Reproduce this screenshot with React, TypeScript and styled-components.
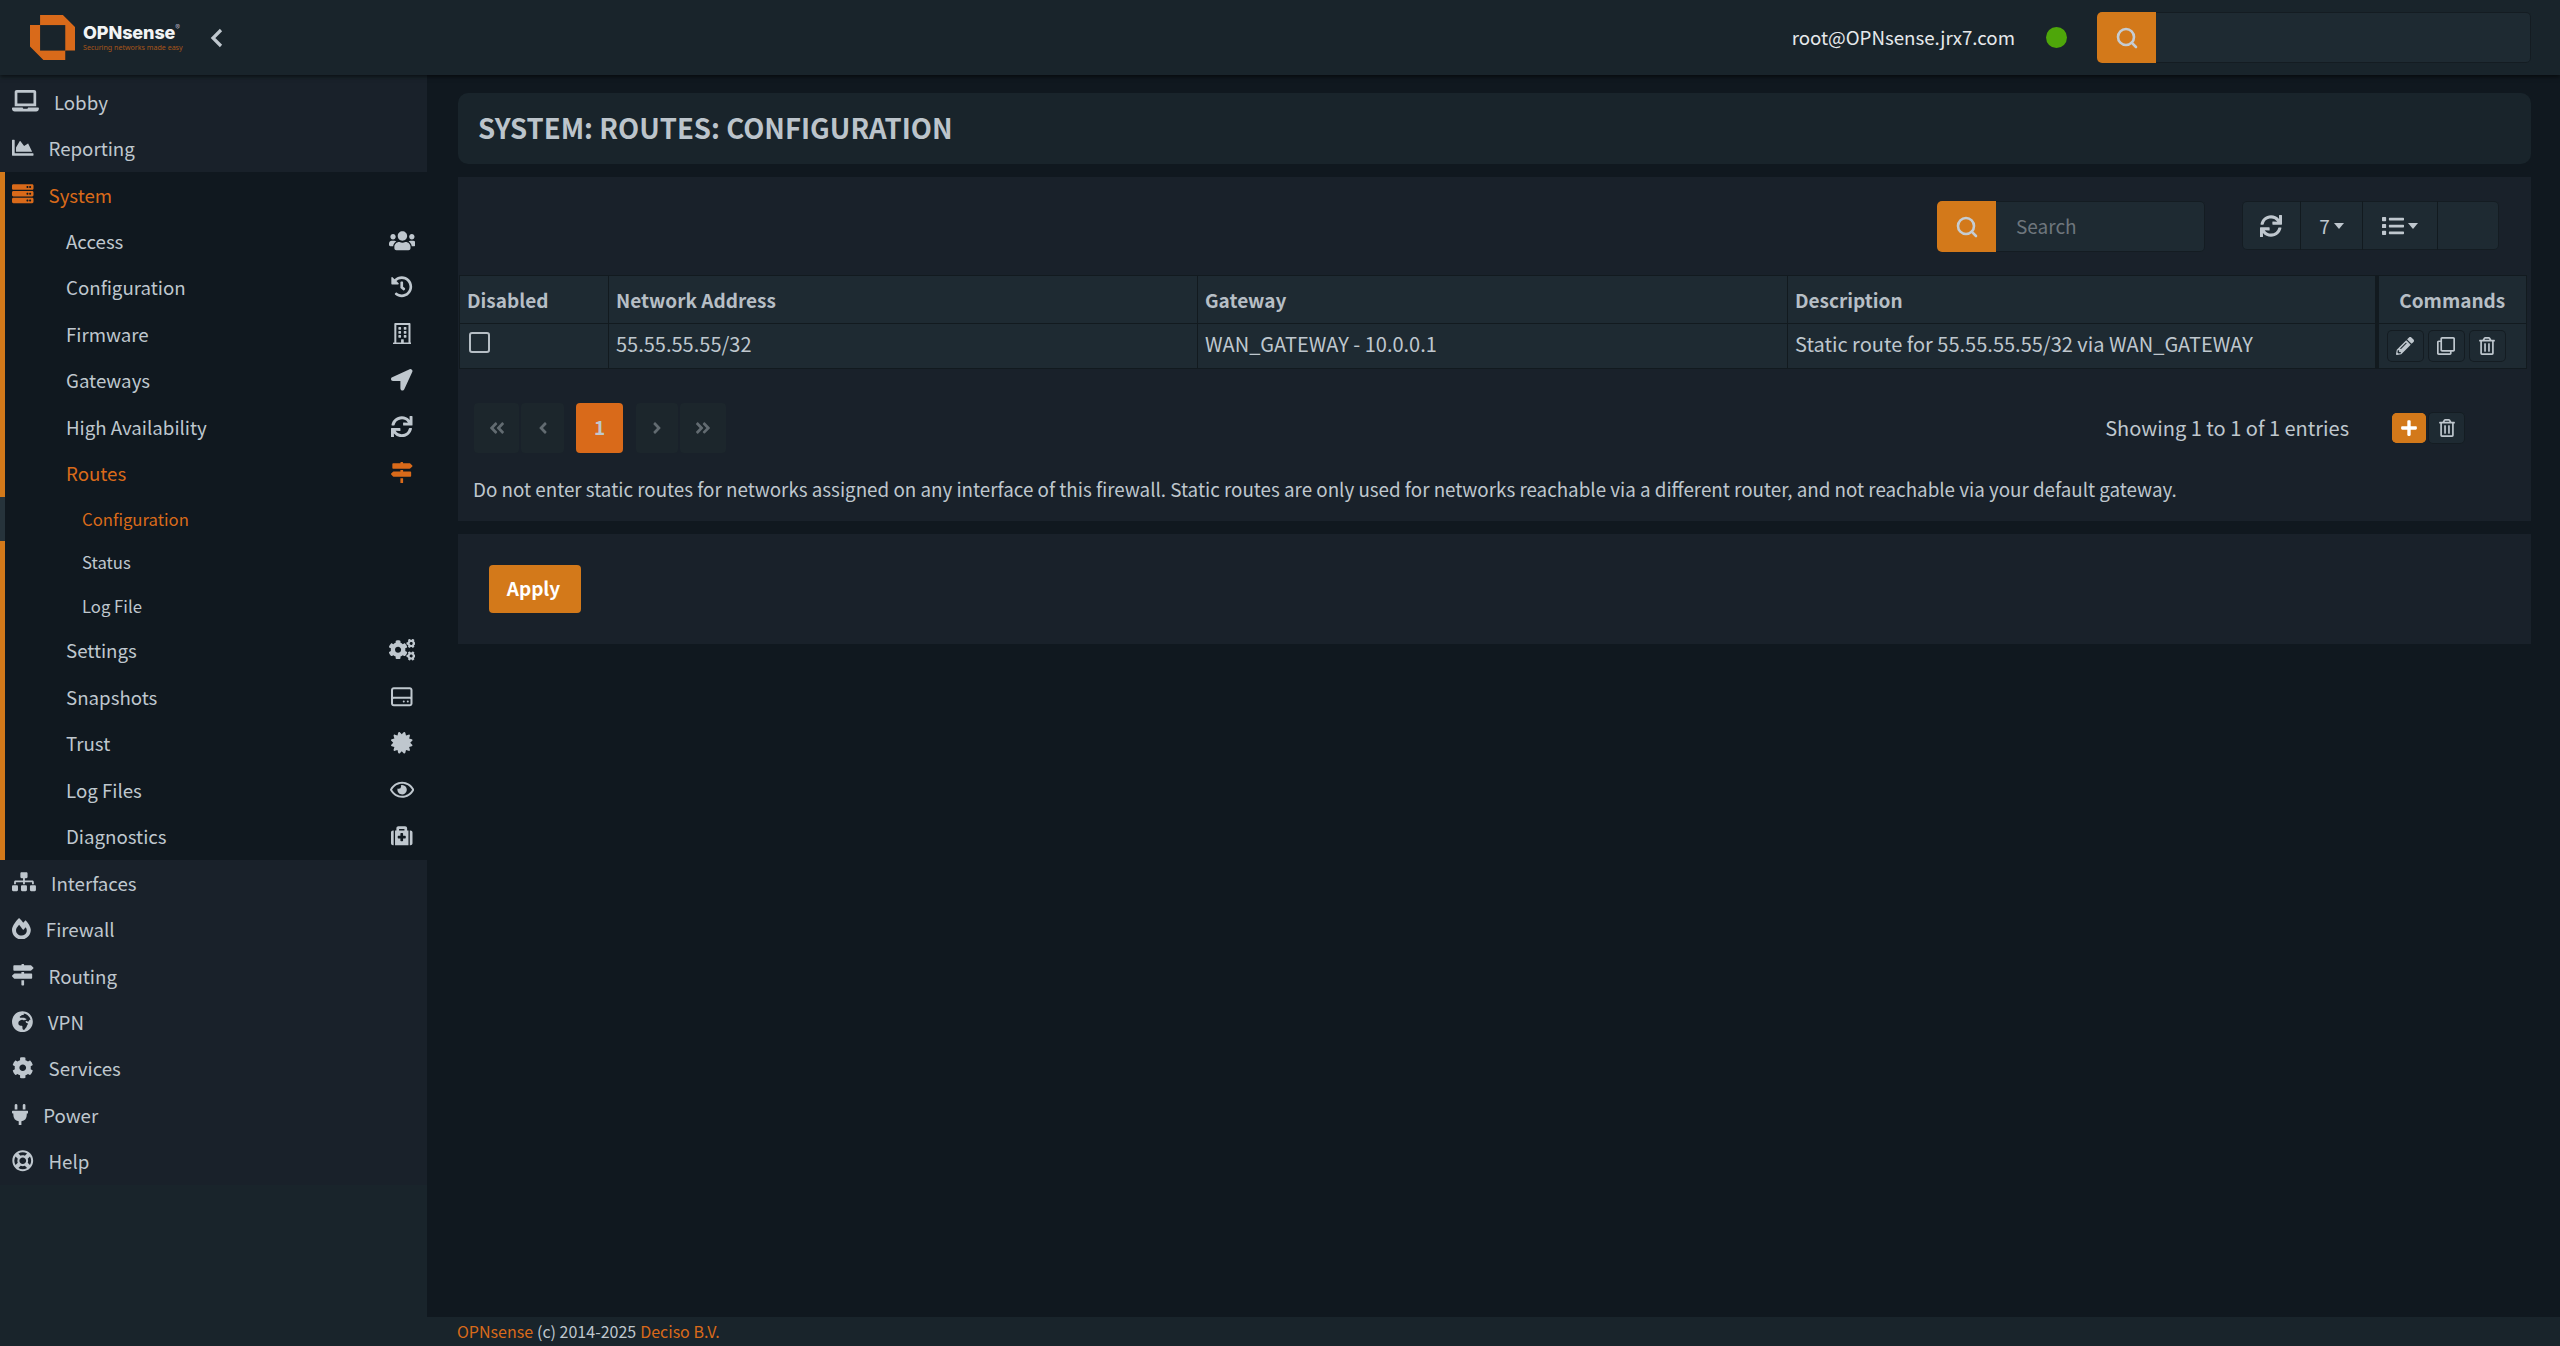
import React from 'react';
import styled, { createGlobalStyle } from 'styled-components';
import {
    FaAngleDoubleLeft, FaAngleDoubleRight, FaAngleLeft, FaAngleRight,
    FaCertificate, FaChartArea, FaCog, FaCogs, FaFireAlt, FaGlobeAfrica, FaHistory,
    FaLaptop, FaList, FaLocationArrow, FaMapSigns, FaMedkit, FaPencilAlt, FaPlug, FaPlus,
    FaRegBuilding, FaRegClone, FaRegEye, FaRegLifeRing, FaRegTrashAlt, FaServer, FaSitemap, FaSync, FaUsers,
} from 'react-icons/fa';
import { FaRegHardDrive } from 'react-icons/fa6';
import { Search } from 'lucide-react';

const ORANGE = '#d3791a';
const ACTIVE = '#d96a1a';
const TEXT = '#bfc7ce';

const GlobalStyle = createGlobalStyle`
    html, body { margin: 0; height: 100%; background: #10181f; }
    #root { height: 100%; }
    * { box-sizing: border-box; }
    body { font-family: "Noto Sans CJK SC", "Noto Sans", sans-serif; color: ${TEXT}; font-size: 20px; }
`;

const Page = styled.div`
    height: 1346px;
    display: flex;
    flex-direction: column;
    overflow: hidden;
`;

/* top bar */
const TopBar = styled.header`
    position: relative;
    z-index: 2;
    height: 75px;
    flex: none;
    display: flex;
    align-items: center;
    padding: 0 29px 0 30px;
    background: #19242b;
    box-shadow: 0 2px 4px rgba(0, 0, 0, .55);
`;

const Brand = styled.div`
    display: flex;
    align-items: center;
    gap: 8px;
`;

const BrandText = styled.div`
    display: flex;
    flex-direction: column;
    width: 97px;
`;

const BrandName = styled.span`
    font-family: "Inter", sans-serif;
    font-weight: 800;
    font-size: 18px;
    line-height: 19px;
    color: #f2f4f5;
    letter-spacing: -.1px;
    sup { font-size: 7px; font-weight: 400; line-height: 0; vertical-align: 9px; color: #aab; }
`;

const BrandTag = styled.span`
    font-family: "Noto Sans", sans-serif;
    font-size: 7.1px;
    line-height: 10px;
    white-space: nowrap;
    color: #a8551a;
`;

const Collapse = styled.span`
    margin-left: 30px;
    display: flex;
    color: ${TEXT};
`;

const TopRight = styled.div`
    margin-left: auto;
    display: flex;
    align-items: center;
`;

const UserName = styled.span`
    font-size: 18.7px;
    padding-bottom: 2px;
    color: #e6e9eb;
`;

const StatusDot = styled.span`
    width: 21px;
    height: 21px;
    margin: 0 30px 0 31px;
    border-radius: 50%;
    background: #4ea60a;
`;

const SearchBox = styled.div<{ $width: number }>`
    width: ${p => p.$width}px;
    height: 51px;
    display: flex;
    border-radius: 5px;
    overflow: hidden;
    background: #1e2a32;
    box-shadow: inset 0 0 0 1px #141c22;
`;

const SearchButton = styled.span`
    width: 59px;
    flex: none;
    display: flex;
    align-items: center;
    justify-content: center;
    background: ${ORANGE};
    color: #c5ccd2;
`;

const SearchInput = styled.input`
    flex: 1;
    min-width: 0;
    padding: 0 20px 2px;
    border: 0;
    outline: 0;
    background: transparent;
    font: inherit;
    font-size: 19px;
    color: ${TEXT};
    &::placeholder { color: #6e767d; opacity: 1; }
`;

/* page body */
const Body = styled.div`
    flex: 1;
    display: flex;
    min-height: 0;
`;

const Sidebar = styled.nav`
    width: 427px;
    flex: none;
    padding-top: 4px;
    background: #19242b;
`;

const Section = styled.div`
    background: #10181f;
`;

const Row = styled.div<{ $top?: boolean; $level?: number; $active?: boolean; $rail?: boolean; $current?: boolean }>`
    height: ${p => (p.$level === 2 ? 43.6 : 46.45)}px;
    display: flex;
    align-items: center;
    gap: 15px;
    padding-left: ${p => (p.$rail ? (p.$level === 2 ? 77 : p.$level === 1 ? 61 : 7) : 12)}px;
    padding-right: 9px;
    padding-bottom: ${p => (p.$level === 2 ? 0 : 2)}px;
    font-size: ${p => (p.$level === 2 ? 16.7 : 18.7)}px;
    color: ${p => (p.$active ? ACTIVE : TEXT)};
    background: ${p => (p.$top ? '#19212a' : '#10181f')};
    border-left: ${p => (p.$rail ? `5px solid ${p.$current ? '#26333b' : ORANGE}` : '0')};
`;

const NavIcon = styled.span<{ $units: number }>`
    width: ${p => (p.$units / 512) * 21.5}px;
    height: 21.5px;
    flex: none;
    display: flex;
    svg { width: 100%; height: 100%; }
`;

const RowIcon = styled.span`
    margin-left: auto;
    width: 32px;
    display: flex;
    justify-content: center;
`;

const Main = styled.main`
    flex: 1;
    min-width: 0;
    display: flex;
    flex-direction: column;
`;

const Content = styled.div`
    flex: 1;
    padding: 18px 29px 0 31px;
    display: flex;
    flex-direction: column;
    gap: 13px;
`;

const TitleCard = styled.div`
    height: 71px;
    display: flex;
    align-items: center;
    padding: 0 20px 4px;
    border-radius: 10px;
    background: #19242b;
`;

const Title = styled.h1`
    margin: 0;
    font-size: 27.5px;
    font-weight: 700;
    text-transform: uppercase;
    color: #bcc4cb;
`;

const Card = styled.section`
    background: #19212a;
`;

const Toolbar = styled.div`
    display: flex;
    justify-content: flex-end;
    gap: 37px;
    padding: 24px 32px 23px 0;
`;

const ButtonGroup = styled.div`
    height: 49px;
    display: flex;
    border-radius: 5px;
    overflow: hidden;
    background: #1e2a32;
    box-shadow: inset 0 0 0 1px #141c22;
`;

const GroupButton = styled.span<{ $width: number }>`
    width: ${p => p.$width}px;
    display: flex;
    align-items: center;
    justify-content: center;
    gap: 4px;
    font-size: 19px;
    color: ${TEXT};
    & + & { border-left: 1px solid #121a1f; }
    svg { font-size: 22px; }
`;

const Caret = styled.i`
    width: 0;
    height: 0;
    border-left: 5.5px solid transparent;
    border-right: 5.5px solid transparent;
    border-top: 6px solid ${TEXT};
`;

const TableWrap = styled.div`
    margin: 0 4px 0 1px;
`;

const Table = styled.table`
    width: 100%;
    table-layout: fixed;
    border-collapse: collapse;
    background: #1e2a32;
    border: 1px solid #121a1f;
`;

const Th = styled.th<{ $sticky?: boolean }>`
    height: 48px;
    padding: 0 7px;
    text-align: ${p => (p.$sticky ? 'center' : 'left')};
    font-size: 19px;
    font-weight: 700;
    color: #b6bec5;
    border: 1px solid #121a1f;
    border-left: ${p => (p.$sticky ? '4px solid #121a1f' : '1px solid #121a1f')};
`;

const Td = styled.td<{ $sticky?: boolean; $plain?: boolean }>`
    height: 45px;
    padding: 0 7px ${p => (p.$plain ? 0 : 5)}px;
    font-size: 20px;
    color: ${TEXT};
    border: 1px solid #121a1f;
    border-left: ${p => (p.$sticky ? '4px solid #121a1f' : '1px solid #121a1f')};
`;

const CheckBox = styled.span`
    display: block;
    width: 21px;
    height: 21px;
    margin: -8px 0 0 2px;
    border: 2px solid #b6bec5;
    border-radius: 3px;
`;

const Commands = styled.div`
    display: flex;
    gap: 4px;
    padding-left: 1px;
`;

const IconButton = styled.span<{ $primary?: boolean }>`
    width: ${p => (p.$primary ? 34 : 37)}px;
    height: ${p => (p.$primary ? 30 : 32)}px;
    display: flex;
    align-items: center;
    justify-content: center;
    border-radius: 5px;
    font-size: 18px;
    color: ${p => (p.$primary ? '#fff' : TEXT)};
    background: ${p => (p.$primary ? ORANGE : '#1e2a32')};
    box-shadow: inset 0 0 0 1px ${p => (p.$primary ? ORANGE : '#141c22')};
`;

const PagerRow = styled.div`
    display: flex;
    align-items: center;
    padding: 34px 66px 0 16px;
`;

const Pager = styled.div`
    display: flex;
    align-items: stretch;
    height: 50px;
`;

const PageItem = styled.span<{ $width: number; $gap?: number; $active?: boolean }>`
    width: ${p => p.$width}px;
    margin-left: ${p => p.$gap || 0}px;
    padding-bottom: ${p => (p.$active ? 3 : 0)}px;
    display: flex;
    align-items: center;
    justify-content: center;
    border-radius: 4px;
    font-size: ${p => (p.$active ? 19 : 18)}px;
    font-weight: 700;
    color: ${p => (p.$active ? TEXT : '#626b71')};
    background: ${p => (p.$active ? ACTIVE : '#1c262c')};
`;

const Showing = styled.span`
    margin-left: auto;
    margin-right: 43px;
    padding-bottom: 2px;
    font-size: 20px;
    color: ${TEXT};
`;

const PagerActions = styled.div`
    display: flex;
    align-items: center;
    gap: 2px;
`;

const HelpText = styled.p`
    margin: 0;
    padding: 21px 15px 17px;
    font-size: 18.8px;
    line-height: 30px;
    color: ${TEXT};
`;

const ApplyCard = styled(Card)`
    padding: 31px;
    height: 110px;
`;

const ApplyButton = styled.button`
    width: 92px;
    height: 48px;
    padding: 0 3px 3px 0;
    border: 0;
    border-radius: 4px;
    background: ${ORANGE};
    color: #fff;
    font: inherit;
    font-size: 19px;
    font-weight: 700;
`;

const Footer = styled.footer`
    height: 29px;
    flex: none;
    padding: 0 0 2px 30px;
    display: flex;
    align-items: center;
    gap: 4px;
    background: #19242b;
    font-size: 16px;
    color: ${TEXT};
`;

const FooterLink = styled.span`
    color: ${ACTIVE};
`;

const Logo = () => (
    <svg width="45" height="45" viewBox="0 0 134 134">
        <path fill="#d96a1a" d="M30 0H98L134 36V106H105V134H40L0 94V30H30Z" />
        <path fill="#19242b" d="M30 30H105V106H30Z" />
    </svg>
);

const ChevronBack = () => (
    <svg width="13" height="20" viewBox="0 0 13 20" fill="none" stroke="currentColor" strokeWidth="3.2">
        <path d="M11 2L3 10L11 18" />
    </svg>
);

const topItems = [
    { label: 'Lobby', units: 640, icon: <FaLaptop /> },
    { label: 'Reporting', units: 512, icon: <FaChartArea /> },
];

const systemItems = [
    { label: 'Access', units: 640, icon: <FaUsers /> },
    { label: 'Configuration', units: 512, icon: <FaHistory /> },
    { label: 'Firmware', units: 448, icon: <FaRegBuilding /> },
    { label: 'Gateways', units: 512, icon: <FaLocationArrow /> },
    { label: 'High Availability', units: 512, icon: <FaSync /> },
];

const systemItemsAfter = [
    { label: 'Settings', units: 640, icon: <FaCogs /> },
    { label: 'Snapshots', units: 512, icon: <FaRegHardDrive /> },
    { label: 'Trust', units: 512, icon: <FaCertificate /> },
    { label: 'Log Files', units: 576, icon: <FaRegEye /> },
    { label: 'Diagnostics', units: 512, icon: <FaMedkit /> },
];

const bottomItems = [
    { label: 'Interfaces', units: 570, icon: <FaSitemap /> },
    { label: 'Firewall', units: 448, icon: <FaFireAlt /> },
    { label: 'Routing', units: 512, icon: <FaMapSigns /> },
    { label: 'VPN', units: 496, icon: <FaGlobeAfrica /> },
    { label: 'Services', units: 512, icon: <FaCog /> },
    { label: 'Power', units: 384, icon: <FaPlug /> },
    { label: 'Help', units: 512, icon: <FaRegLifeRing /> },
];

export default function App() {
    return (
        <Page>
            <GlobalStyle />
            <TopBar>
                <Brand>
                    <Logo />
                    <BrandText>
                        <BrandName>OPNsense<sup>®</sup></BrandName>
                        <BrandTag>Securing networks made easy</BrandTag>
                    </BrandText>
                </Brand>
                <Collapse><ChevronBack /></Collapse>
                <TopRight>
                    <UserName>root@OPNsense.jrx7.com</UserName>
                    <StatusDot />
                    <SearchBox $width={434}>
                        <SearchButton><Search size={24} strokeWidth={2.6} /></SearchButton>
                    </SearchBox>
                </TopRight>
            </TopBar>
            <Body>
                <Sidebar>
                    {topItems.map(item => (
                        <Row key={item.label} $top><NavIcon $units={item.units}>{item.icon}</NavIcon>{item.label}</Row>
                    ))}
                    <Section>
                        <Row $rail $active><NavIcon $units={512}><FaServer /></NavIcon>System</Row>
                        {systemItems.map(item => (
                            <Row key={item.label} $rail $level={1}>
                                {item.label}<RowIcon><NavIcon $units={item.units}>{item.icon}</NavIcon></RowIcon>
                            </Row>
                        ))}
                        <Row $rail $level={1} $active>
                            Routes<RowIcon><NavIcon $units={512}><FaMapSigns /></NavIcon></RowIcon>
                        </Row>
                        <Row $rail $current $level={2} $active>Configuration</Row>
                        <Row $rail $level={2}>Status</Row>
                        <Row $rail $level={2}>Log File</Row>
                        {systemItemsAfter.map(item => (
                            <Row key={item.label} $rail $level={1}>
                                {item.label}<RowIcon><NavIcon $units={item.units}>{item.icon}</NavIcon></RowIcon>
                            </Row>
                        ))}
                    </Section>
                    {bottomItems.map(item => (
                        <Row key={item.label} $top><NavIcon $units={item.units}>{item.icon}</NavIcon>{item.label}</Row>
                    ))}
                </Sidebar>
                <Main>
                    <Content>
                        <TitleCard><Title>System: Routes: Configuration</Title></TitleCard>
                        <Card>
                            <Toolbar>
                                <SearchBox $width={268}>
                                    <SearchButton><Search size={24} strokeWidth={2.6} /></SearchButton>
                                    <SearchInput placeholder="Search" />
                                </SearchBox>
                                <ButtonGroup>
                                    <GroupButton $width={58}><FaSync /></GroupButton>
                                    <GroupButton $width={62}>7<Caret /></GroupButton>
                                    <GroupButton $width={75}><FaList /><Caret /></GroupButton>
                                    <GroupButton $width={62} />
                                </ButtonGroup>
                            </Toolbar>
                            <TableWrap>
                                <Table>
                                    <colgroup>
                                        <col style={{ width: 149 }} />
                                        <col style={{ width: 589 }} />
                                        <col style={{ width: 590 }} />
                                        <col />
                                        <col style={{ width: 150 }} />
                                    </colgroup>
                                    <thead>
                                        <tr>
                                            <Th>Disabled</Th>
                                            <Th>Network Address</Th>
                                            <Th>Gateway</Th>
                                            <Th>Description</Th>
                                            <Th $sticky>Commands</Th>
                                        </tr>
                                    </thead>
                                    <tbody>
                                        <tr>
                                            <Td $plain><CheckBox /></Td>
                                            <Td>55.55.55.55/32</Td>
                                            <Td>WAN_GATEWAY - 10.0.0.1</Td>
                                            <Td>Static route for 55.55.55.55/32 via WAN_GATEWAY</Td>
                                            <Td $sticky $plain>
                                                <Commands>
                                                    <IconButton><FaPencilAlt /></IconButton>
                                                    <IconButton><FaRegClone /></IconButton>
                                                    <IconButton><FaRegTrashAlt /></IconButton>
                                                </Commands>
                                            </Td>
                                        </tr>
                                    </tbody>
                                </Table>
                            </TableWrap>
                            <PagerRow>
                                <Pager>
                                    <PageItem $width={45}><FaAngleDoubleLeft /></PageItem>
                                    <PageItem $width={43} $gap={2}><FaAngleLeft /></PageItem>
                                    <PageItem $width={47} $gap={12} $active>1</PageItem>
                                    <PageItem $width={42} $gap={13}><FaAngleRight /></PageItem>
                                    <PageItem $width={46} $gap={2}><FaAngleDoubleRight /></PageItem>
                                </Pager>
                                <Showing>Showing 1 to 1 of 1 entries</Showing>
                                <PagerActions>
                                    <IconButton $primary><FaPlus /></IconButton>
                                    <IconButton><FaRegTrashAlt /></IconButton>
                                </PagerActions>
                            </PagerRow>
                            <HelpText>
                                Do not enter static routes for networks assigned on any interface of this firewall.
                                {' '}Static routes are only used for networks reachable via a different router, and not
                                {' '}reachable via your default gateway.
                            </HelpText>
                        </Card>
                        <ApplyCard>
                            <ApplyButton>Apply</ApplyButton>
                        </ApplyCard>
                    </Content>
                    <Footer>
                        <FooterLink>OPNsense</FooterLink>(c) 2014-2025 <FooterLink>Deciso B.V.</FooterLink>
                    </Footer>
                </Main>
            </Body>
        </Page>
    );
}
